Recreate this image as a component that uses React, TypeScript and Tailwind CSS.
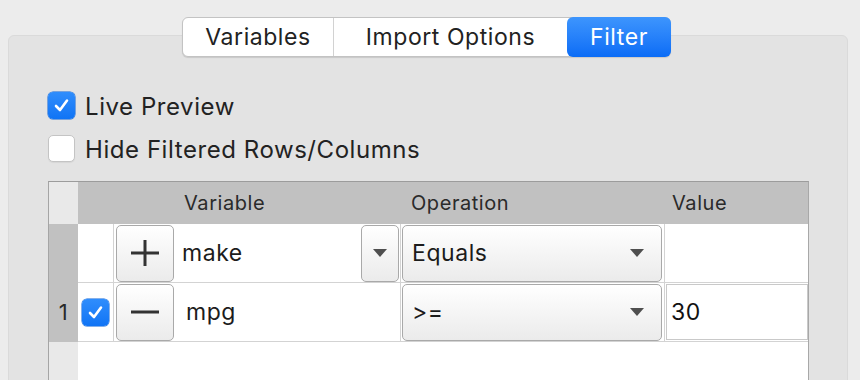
import React from 'react';

const font = { fontFamily: 'Inter, "Noto Sans", sans-serif' };

const Check = ({ checked }: { checked: boolean }) =>
  checked ? (
    <div className="w-[27px] h-[27px] rounded-[5px] bg-gradient-to-b from-[#2f8dfc] to-[#0f74f5] flex items-center justify-center shadow-[0_0_0_0.5px_#0a62d8]">
      <svg width="17" height="17" viewBox="0 0 17 17">
        <path d="M3 9 L7 13 L14 3.5" fill="none" stroke="#fff" strokeWidth="2.6" strokeLinecap="round" strokeLinejoin="round" />
      </svg>
    </div>
  ) : (
    <div className="w-[27px] h-[27px] rounded-[5px] bg-white border border-[#c4c4c4] shadow-[0_1px_1px_rgba(0,0,0,0.06)]" />
  );

const Triangle = () => (
  <svg width="14" height="8" viewBox="0 0 14 8">
    <path d="M0 0 L14 0 L7 8 Z" fill="#4f4f4f" />
  </svg>
);

const SquareButton = ({ sign }: { sign: '+' | '-' }) => (
  <div className="w-[58px] h-[57px] rounded-[5px] border border-[#a9a9a9] bg-gradient-to-b from-white to-[#ebebeb] flex items-center justify-center">
    <svg width="30" height="30" viewBox="0 0 30 30">
      <path d="M1 15 H29" stroke="#333" strokeWidth="3" />
      {sign === '+' && <path d="M15 2 V28" stroke="#333" strokeWidth="3" />}
    </svg>
  </div>
);

const Combo = ({ label }: { label: string }) => (
  <div className="w-[260px] h-[57px] rounded-[5px] border border-[#a9a9a9] bg-gradient-to-b from-white to-[#ebebeb] flex items-center justify-between pl-[9px] pr-[17px]">
    <span className="text-[23px] text-[#1c1c1c]">{label}</span>
    <Triangle />
  </div>
);

export default function App() {
  return (
    <div className="w-[860px] h-[380px] overflow-hidden bg-[#ececec] pt-[17px] tracking-[0.035em]" style={font}>
      {/* Tabs */}
      <div className="relative z-10 ml-[182px] flex w-[489px] h-[40px] rounded-[6px] bg-white border border-[#c3c3c3] shadow-[0_1px_1px_rgba(0,0,0,0.12)] text-[23px] text-[#222]">
        <div className="w-[151px] flex items-center justify-center border-r border-[#d2d2d2]">Variables</div>
        <div className="w-[233px] flex items-center justify-center">Import Options</div>
        <div className="flex-1 -my-px -mr-px flex items-center justify-center rounded-[6px] bg-gradient-to-b from-[#3d95fd] to-[#0a6cf6] text-white">
          Filter
        </div>
      </div>

      {/* Panel */}
      <div className="-mt-[22px] ml-[8px] w-[840px] h-[400px] rounded-[6px] bg-[#e3e3e3] border border-[#dadada] pt-[56px] pl-[39px]">
        <div className="flex flex-col gap-[16px] text-[24px] text-[#222]">
          <label className="flex items-center gap-[10px] h-[27px]">
            <Check checked />
            <span className="pt-[3px]">Live Preview</span>
          </label>
          <label className="flex items-center gap-[10px] h-[27px]">
            <Check checked={false} />
            <span className="pt-[3px]">Hide Filtered Rows/Columns</span>
          </label>
        </div>

        {/* Table */}
        <div className="mt-[19px] w-[761px] h-[220px] bg-white border-t border-l border-r border-t-[#9c9c9c] border-l-[#a5a5a5] border-r-[#a8a8a8]">
          <div className="grid grid-cols-[29px_36px_287px_264px_1fr]">
            {/* header */}
            <div className="h-[42px] bg-[#e9e9e9]" />
            <div className="col-span-4 grid grid-cols-[36px_287px_264px_1fr] h-[42px] bg-[#c1c1c1] text-[20px] text-[#2a2a2a] items-center">
              <div />
              <div className="pl-[70px]">Variable</div>
              <div className="pl-[10px]">Operation</div>
              <div className="pl-[7px]">Value</div>
            </div>

            {/* row 1 */}
            <div className="h-[59px] bg-[#c1c1c1]" />
            <div className="h-[59px] border-b border-r border-[#d3d3d3]" />
            <div className="h-[59px] border-b border-r border-[#d3d3d3] flex items-center pl-[2px] pr-[1px]">
              <SquareButton sign="+" />
              <span className="ml-[8px] text-[23px] text-[#1c1c1c] flex-1">make</span>
              <div className="w-[38px] h-[57px] rounded-[5px] border border-[#a9a9a9] bg-gradient-to-b from-white to-[#ebebeb] flex items-center justify-center">
                <Triangle />
              </div>
            </div>
            <div className="h-[59px] border-b border-r border-[#d3d3d3] flex items-center pl-[1px]">
              <Combo label="Equals" />
            </div>
            <div className="h-[59px] border-b border-[#d3d3d3]" />

            {/* row 2 */}
            <div className="h-[59px] bg-[#c1c1c1] flex items-center justify-center text-[22px] text-[#2a2a2a]">1</div>
            <div className="h-[59px] border-b border-r border-[#d3d3d3] flex items-center justify-center">
              <Check checked />
            </div>
            <div className="h-[59px] border-b border-r border-[#d3d3d3] flex items-center pl-[2px]">
              <SquareButton sign="-" />
              <span className="ml-[12px] text-[23px] text-[#1c1c1c]">mpg</span>
            </div>
            <div className="h-[59px] border-b border-r border-[#d3d3d3] flex items-center pl-[1px]">
              <Combo label=">=" />
            </div>
            <div className="h-[59px] border-b border-[#d3d3d3] flex items-center pl-[1px]">
              <div className="w-full h-[56px] border border-[#c9c9c9] flex items-center pl-[4px] text-[23px] text-[#111]">30</div>
            </div>

            {/* empty area */}
            <div className="h-[80px] bg-[#e9e9e9]" />
            <div className="col-span-4 h-[80px] bg-white" />
          </div>
        </div>
      </div>
    </div>
  );
}
